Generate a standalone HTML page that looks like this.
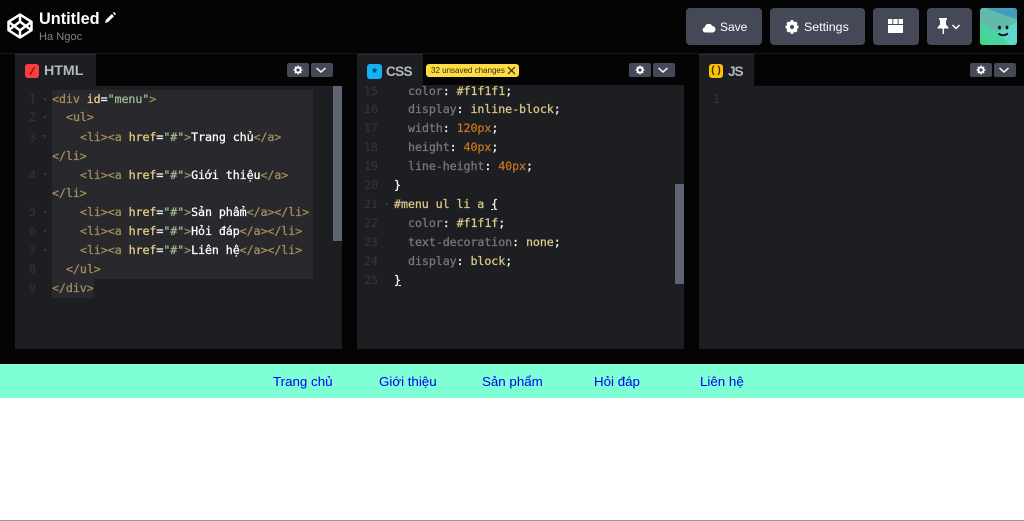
<!DOCTYPE html>
<html lang="vi"><head><meta charset="utf-8"><title>Untitled</title>
<style>
html,body{margin:0;padding:0;background:#fff}
#r{position:relative;width:1024px;height:521px;overflow:hidden;background:#fff;font-family:"Liberation Sans",sans-serif}
#r div,#r svg{position:absolute}
.bk{background:#040404}
.p{background:#1d1e22;top:86px;height:263px}
.t{background:#1d1e22;top:54px;height:32px;border-top:1px solid #2c2d33;box-sizing:border-box}
.lbl{top:63px;color:#b4b6c0;font-weight:bold;line-height:17px;white-space:nowrap}
.ib{background:#444857;height:14px;border-radius:2px;top:63px}
.btn{background:#444857;border-radius:4px;top:8px;height:37px}
.bt{top:9px;color:#fff;line-height:37px;white-space:nowrap}
.c{font:11.67px/19px "DejaVu Sans Mono","Noto Sans CJK SC",monospace;white-space:pre;height:19px;letter-spacing:-.08px;color:#fff;-webkit-text-stroke:.25px currentColor}
.n{font:11.67px/19px "DejaVu Sans Mono",monospace;color:#34363c;text-align:right;width:24px;height:19px}
.tg{color:#a5905c}.at{color:#e6cf85}.st{color:#a0bb93}.pr{color:#7d7682}.v{color:#dcc985}.num{color:#c8721f}.w{color:#f4f4f4}
.f{width:0;height:0;border-left:2.5px solid transparent;border-right:2.5px solid transparent;border-top:3px solid #34363c}
.m{top:365px;font-size:13.33px;line-height:34px;color:#0000f5;white-space:nowrap}
</style></head><body><div id="r">
<div class="bk" style="left:0;top:0;width:1024px;height:364px"></div>
<div style="left:0;top:53px;width:1024px;height:1px;background:#17181b"></div>

<svg style="left:7px;top:13px" width="26" height="26" viewBox="0 0 26 26" fill="none" stroke="#fff" stroke-width="2.5" stroke-linejoin="round"><path d="M13 1.500 24.500 8.800V17.200L13 24.500 1.500 17.200V8.800Z"/><path d="M13 1.500V8.600M13 17.400V24.500M1.500 8.800 13 17.400 24.500 8.800M1.500 17.200 13 8.600 24.500 17.200"/></svg>
<div style="left:39px;top:9px;font-size:16.3px;font-weight:bold;color:#fff;line-height:20px;white-space:nowrap">Untitled</div>
<svg style="left:104px;top:11px" width="13" height="13" viewBox="0 0 13 13"><path d="M1 12 2 8.800 7.800 3 10 5.200 4.200 11Z" fill="#fff"/><path d="M8.800 2 10 1 12 3 11 4.200Z" fill="#fff"/></svg>
<div style="left:39px;top:30px;font-size:11.1px;color:#81848f;line-height:15px;white-space:nowrap">Ha Ngoc</div>

<div class="btn" style="left:686px;width:76px"></div>
<svg style="left:702px;top:22px" width="14" height="11" viewBox="0 0 14 11"><path d="M3 10.500A2.700 2.700 0 0 1 2.800 5.200 4 4 0 0 1 10.300 4 3.300 3.300 0 0 1 11 10.500Z" fill="#fff"/></svg>
<div class="bt" style="left:720px;font-size:12px">Save</div>
<div class="btn" style="left:770px;width:95px"></div>
<svg style="left:785px;top:20px" width="14" height="14" viewBox="0 0 14 14"><circle cx="7" cy="7" r="3.800" fill="none" stroke="#fff" stroke-width="3.600"/><path d="M7 0V3M7 11V14M.5 7H3M11 7H13.500M2.300 2.300 4 4M10 10 11.700 11.700M11.700 2.300 10 4M4 10 2.300 11.700" stroke="#fff" stroke-width="2.600"/></svg>
<div class="bt" style="left:804px;font-size:12.4px">Settings</div>
<div class="btn" style="left:873px;width:46px"></div>
<svg style="left:888px;top:19px" width="15" height="14" viewBox="0 0 15 14" fill="#fff"><rect x="0" y="0" width="4.400" height="5"/><rect x="5.300" y="0" width="4.400" height="5"/><rect x="10.600" y="0" width="4.400" height="5"/><rect x="0" y="6" width="15" height="8"/></svg>
<div class="btn" style="left:927px;width:45px"></div>
<svg style="left:937px;top:18px" width="26" height="16" viewBox="0 0 26 16"><path d="M2 0H10V1.500L9 2.500V6.500L11.500 9.500V10.500H7V16H5.600V10.500H.5V9.500L3 6.500V2.500L2 1.500Z" fill="#fff"/><path d="M15.500 7 19 10.500 22.500 7" fill="none" stroke="#fff" stroke-width="1.500"/></svg>
<svg style="left:980px;top:8px;border-radius:3px" width="37" height="37" viewBox="0 0 37 37"><rect width="37" height="37" fill="#4ad39c"/><path d="M0 0H37V14L18 24 0 14Z" fill="#63b9ab"/><path d="M6 0H37V11L24 7Z" fill="#3f9fbd"/><path d="M37 14 18 24 30 37H37Z" fill="#5dd8cb"/><path d="M0 25 12 37H0Z" fill="#3fd68c"/><ellipse cx="19.500" cy="19.500" rx="1.400" ry="1.900" fill="#111"/><ellipse cx="27" cy="19.500" rx="1.400" ry="1.900" fill="#111"/><path d="M18.500 25.500Q23 29 28 25.500" stroke="#111" stroke-width="1.800" fill="none"/></svg>

<!-- HTML -->
<div class="t" style="left:15px;width:81px"></div>
<div style="left:25px;top:64px;width:14px;height:14px;border-radius:3px;background:#ff3c41"></div>
<svg style="left:25px;top:64px" width="14" height="14"><path d="M9.500 3 5 11" stroke="#6a1216" stroke-width="1.200"/></svg>
<div class="lbl" style="left:44px;font-size:14.2px">HTML</div>
<div class="ib" style="left:287px;width:22px"></div><div class="ib" style="left:311px;width:22px"></div>
<div class="p" style="left:15px;width:327px"></div>
<div style="left:52px;top:90px;width:261px;height:189px;background:#29292d"></div>
<div style="left:52px;top:279px;width:42px;height:19px;background:#29292d"></div>
<div style="left:333px;top:86px;width:9px;height:155px;background:#5f6473"></div>

<div class="n" style="left:12px;top:90px">1</div><div class="f" style="left:43px;top:98px"></div>
<div class="n" style="left:12px;top:108px">2</div><div class="f" style="left:43px;top:116px"></div>
<div class="n" style="left:12px;top:128px">3</div><div class="f" style="left:43px;top:135px"></div>
<div class="n" style="left:12px;top:166px">4</div><div class="f" style="left:43px;top:173px"></div>
<div class="n" style="left:12px;top:203px">5</div><div class="f" style="left:43px;top:211px"></div>
<div class="n" style="left:12px;top:222px">6</div><div class="f" style="left:43px;top:230px"></div>
<div class="n" style="left:12px;top:241px">7</div><div class="f" style="left:43px;top:249px"></div>
<div class="n" style="left:12px;top:260px">8</div>
<div class="n" style="left:12px;top:279px">9</div>

<div class="c" style="left:52px;top:90px"><span class="tg">&lt;div</span> <span class="at">id</span><span class="w">=</span><span class="st">"menu"</span><span class="tg">&gt;</span></div>
<div class="c" style="left:66px;top:108px"><span class="tg">&lt;ul&gt;</span></div>
<div class="c" style="left:80px;top:128px"><span class="tg">&lt;li&gt;&lt;a</span> <span class="at">href</span><span class="w">=</span><span class="st">"#"</span><span class="tg">&gt;</span>Trang chủ<span class="tg">&lt;/a&gt;</span></div>
<div class="c" style="left:52px;top:147px"><span class="tg">&lt;/li&gt;</span></div>
<div class="c" style="left:80px;top:166px"><span class="tg">&lt;li&gt;&lt;a</span> <span class="at">href</span><span class="w">=</span><span class="st">"#"</span><span class="tg">&gt;</span>Giới thiệu<span class="tg">&lt;/a&gt;</span></div>
<div class="c" style="left:52px;top:184px"><span class="tg">&lt;/li&gt;</span></div>
<div class="c" style="left:80px;top:203px"><span class="tg">&lt;li&gt;&lt;a</span> <span class="at">href</span><span class="w">=</span><span class="st">"#"</span><span class="tg">&gt;</span>Sản phẩm<span class="tg">&lt;/a&gt;&lt;/li&gt;</span></div>
<div class="c" style="left:80px;top:222px"><span class="tg">&lt;li&gt;&lt;a</span> <span class="at">href</span><span class="w">=</span><span class="st">"#"</span><span class="tg">&gt;</span>Hỏi đáp<span class="tg">&lt;/a&gt;&lt;/li&gt;</span></div>
<div class="c" style="left:80px;top:241px"><span class="tg">&lt;li&gt;&lt;a</span> <span class="at">href</span><span class="w">=</span><span class="st">"#"</span><span class="tg">&gt;</span>Liên hệ<span class="tg">&lt;/a&gt;&lt;/li&gt;</span></div>
<div class="c" style="left:66px;top:260px"><span class="tg">&lt;/ul&gt;</span></div>
<div class="c" style="left:52px;top:279px"><span class="tg">&lt;/div&gt;</span></div>

<!-- CSS -->
<div class="t" style="left:357px;width:66px"></div>
<div class="p" style="left:357px;width:327px;top:84px;height:265px"></div>
<div class="bk" style="left:423px;top:54px;width:261px;height:31px"></div>
<div class="ib" style="left:629px;width:22px"></div><div class="ib" style="left:653px;width:22px"></div>
<div style="left:367px;top:64px;width:15px;height:15px;border-radius:3px;background:#11b5f5;color:#063b52;font-size:13px;line-height:17px;text-align:center;font-weight:bold">*</div>
<div class="lbl" style="left:386px;font-size:13.6px;letter-spacing:-.7px">CSS</div>
<div style="left:426px;top:64px;width:93px;height:13px;border-radius:3px;background:#ffdd40"></div>
<div style="left:431px;top:64px;font-size:8px;line-height:13px;color:#2a2a20;white-space:nowrap">32 unsaved changes</div>
<svg style="left:507px;top:66px" width="9" height="9"><path d="M1 1 8 8M8 1 1 8" stroke="#2a2a20" stroke-width="1.200"/></svg>
<div style="left:675px;top:184px;width:9px;height:100px;background:#5f6473"></div>

<div class="n" style="left:354px;top:82px">15</div>
<div class="n" style="left:354px;top:100px">16</div>
<div class="n" style="left:354px;top:119px">17</div>
<div class="n" style="left:354px;top:138px">18</div>
<div class="n" style="left:354px;top:157px">19</div>
<div class="n" style="left:354px;top:176px">20</div>
<div class="n" style="left:354px;top:195px">21</div><div class="f" style="left:385px;top:203px"></div>
<div class="n" style="left:354px;top:214px">22</div>
<div class="n" style="left:354px;top:233px">23</div>
<div class="n" style="left:354px;top:252px">24</div>
<div class="n" style="left:354px;top:271px">25</div>

<div class="c" style="left:408px;top:82px"><span class="pr">color</span><span class="w">:</span> <span class="v">#f1f1f1</span><span class="w">;</span></div>
<div class="c" style="left:408px;top:100px"><span class="pr">display</span><span class="w">:</span> <span class="v">inline-block</span><span class="w">;</span></div>
<div class="c" style="left:408px;top:119px"><span class="pr">width</span><span class="w">:</span> <span class="num">120px</span><span class="w">;</span></div>
<div class="c" style="left:408px;top:138px"><span class="pr">height</span><span class="w">:</span> <span class="num">40px</span><span class="w">;</span></div>
<div class="c" style="left:408px;top:157px"><span class="pr">line-height</span><span class="w">:</span> <span class="num">40px</span><span class="w">;</span></div>
<div class="c" style="left:394px;top:176px">}</div>
<div class="c" style="left:394px;top:195px"><span class="v">#menu ul li a</span> <span class="w" style="text-decoration:underline">{</span></div>
<div class="c" style="left:408px;top:214px"><span class="pr">color</span><span class="w">:</span> <span class="v">#f1f1f</span><span class="w">;</span></div>
<div class="c" style="left:408px;top:233px"><span class="pr">text-decoration</span><span class="w">:</span> <span class="v">none</span><span class="w">;</span></div>
<div class="c" style="left:408px;top:252px"><span class="pr">display</span><span class="w">:</span> <span class="v">block</span><span class="w">;</span></div>
<div class="c" style="left:394px;top:271px"><span style="text-decoration:underline">}</span></div>

<!-- JS -->
<div class="t" style="left:699px;width:55px"></div>
<div style="left:709px;top:64px;width:14px;height:14px;border-radius:3px;background:#fcc20a;color:#3a2e00;font-size:10px;line-height:13px;text-align:center;font-weight:bold">( )</div>
<div class="lbl" style="left:728px;font-size:13.6px;letter-spacing:-1px">JS</div>
<div class="ib" style="left:970px;width:22px"></div><div class="ib" style="left:994px;width:22px"></div>
<div class="p" style="left:699px;width:325px"></div>
<div class="n" style="left:696px;top:90px">1</div>

<!-- small gear and chevron icons -->
<svg style="left:287px;top:63px" width="46" height="14" fill="none" stroke="#fff"><circle cx="11" cy="7" r="2.600" stroke-width="2"/><path d="M11 2.500V11.500M6.500 7H15.500M7.800 3.800 14.200 10.200M14.200 3.800 7.800 10.200" stroke-width="1.300" stroke-dasharray="1.800 5.400"/><path d="M29.500 5 34 9 38.500 5" stroke-width="1.500"/></svg>
<svg style="left:629px;top:63px" width="46" height="14" fill="none" stroke="#fff"><circle cx="11" cy="7" r="2.600" stroke-width="2"/><path d="M11 2.500V11.500M6.500 7H15.500M7.800 3.800 14.200 10.200M14.200 3.800 7.800 10.200" stroke-width="1.300" stroke-dasharray="1.800 5.400"/><path d="M29.500 5 34 9 38.500 5" stroke-width="1.500"/></svg>
<svg style="left:970px;top:63px" width="46" height="14" fill="none" stroke="#fff"><circle cx="11" cy="7" r="2.600" stroke-width="2"/><path d="M11 2.500V11.500M6.500 7H15.500M7.800 3.800 14.200 10.200M14.200 3.800 7.800 10.200" stroke-width="1.300" stroke-dasharray="1.800 5.400"/><path d="M29.500 5 34 9 38.500 5" stroke-width="1.500"/></svg>

<!-- Preview -->
<div style="left:0;top:364px;width:1024px;height:34px;background:#7fffd4"></div>
<div class="m" style="left:273px">Trang chủ</div>
<div class="m" style="left:379px">Giới thiệu</div>
<div class="m" style="left:482px">Sản phẩm</div>
<div class="m" style="left:594px">Hỏi đáp</div>
<div class="m" style="left:700px">Liên hệ</div>
<div style="left:0;top:520px;width:1024px;height:1px;background:#999"></div>
</div></body></html>
